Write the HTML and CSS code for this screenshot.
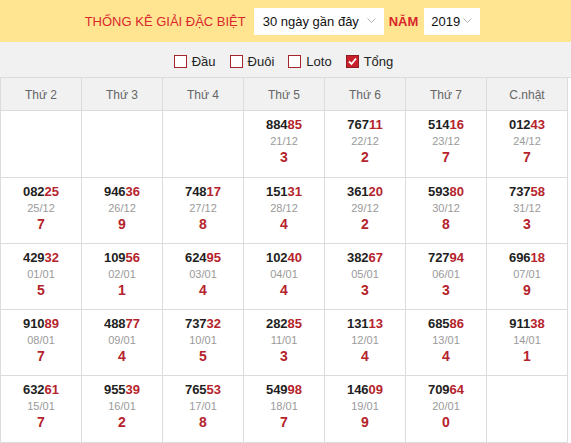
FILE: index.html
```html
<!DOCTYPE html>
<html lang="vi">
<head>
<meta charset="utf-8">
<title>Thống kê giải đặc biệt</title>
<link rel="stylesheet" href="styles.css">
</head>
<body>
<div class="top">
  <span class="title">THỐNG KÊ GIẢI ĐẶC BIỆT</span>
  <div class="select sel-days">30 ngày gần đây<svg class="chev" width="9" height="6" viewBox="0 0 9 6"><polyline points="0.5,0.5 4.5,4.5 8.5,0.5" fill="none" stroke="#b5b5b5" stroke-width="1"/></svg></div>
  <span class="year-label">NĂM</span>
  <div class="select sel-year">2019<svg class="chev" width="9" height="6" viewBox="0 0 9 6"><polyline points="0.5,0.5 4.5,4.5 8.5,0.5" fill="none" stroke="#b5b5b5" stroke-width="1"/></svg></div>
</div>
<div class="filter">
  <label class="opt"><span class="box"></span>Đầu</label>
  <label class="opt"><span class="box"></span>Đuôi</label>
  <label class="opt"><span class="box"></span>Loto</label>
  <label class="opt"><span class="box checked"><svg width="11" height="11" viewBox="0 0 11 11"><polyline points="2,5.5 4.5,8 9,2.5" fill="none" stroke="#fff" stroke-width="1.8"/></svg></span>Tổng</label>
</div>
<div class="grid">
  <div class="hd">Thứ 2</div><div class="hd">Thứ 3</div><div class="hd">Thứ 4</div><div class="hd">Thứ 5</div><div class="hd">Thứ 6</div><div class="hd">Thứ 7</div><div class="hd">C.nhật</div>

  <div class="cell"></div>
  <div class="cell"></div>
  <div class="cell"></div>
  <div class="cell"><div class="num">884<b>85</b></div><div class="date">21/12</div><div class="sum">3</div></div>
  <div class="cell"><div class="num">767<b>11</b></div><div class="date">22/12</div><div class="sum">2</div></div>
  <div class="cell"><div class="num">514<b>16</b></div><div class="date">23/12</div><div class="sum">7</div></div>
  <div class="cell"><div class="num">012<b>43</b></div><div class="date">24/12</div><div class="sum">7</div></div>

  <div class="cell"><div class="num">082<b>25</b></div><div class="date">25/12</div><div class="sum">7</div></div>
  <div class="cell"><div class="num">946<b>36</b></div><div class="date">26/12</div><div class="sum">9</div></div>
  <div class="cell"><div class="num">748<b>17</b></div><div class="date">27/12</div><div class="sum">8</div></div>
  <div class="cell"><div class="num">151<b>31</b></div><div class="date">28/12</div><div class="sum">4</div></div>
  <div class="cell"><div class="num">361<b>20</b></div><div class="date">29/12</div><div class="sum">2</div></div>
  <div class="cell"><div class="num">593<b>80</b></div><div class="date">30/12</div><div class="sum">8</div></div>
  <div class="cell"><div class="num">737<b>58</b></div><div class="date">31/12</div><div class="sum">3</div></div>

  <div class="cell"><div class="num">429<b>32</b></div><div class="date">01/01</div><div class="sum">5</div></div>
  <div class="cell"><div class="num">109<b>56</b></div><div class="date">02/01</div><div class="sum">1</div></div>
  <div class="cell"><div class="num">624<b>95</b></div><div class="date">03/01</div><div class="sum">4</div></div>
  <div class="cell"><div class="num">102<b>40</b></div><div class="date">04/01</div><div class="sum">4</div></div>
  <div class="cell"><div class="num">382<b>67</b></div><div class="date">05/01</div><div class="sum">3</div></div>
  <div class="cell"><div class="num">727<b>94</b></div><div class="date">06/01</div><div class="sum">3</div></div>
  <div class="cell"><div class="num">696<b>18</b></div><div class="date">07/01</div><div class="sum">9</div></div>

  <div class="cell"><div class="num">910<b>89</b></div><div class="date">08/01</div><div class="sum">7</div></div>
  <div class="cell"><div class="num">488<b>77</b></div><div class="date">09/01</div><div class="sum">4</div></div>
  <div class="cell"><div class="num">737<b>32</b></div><div class="date">10/01</div><div class="sum">5</div></div>
  <div class="cell"><div class="num">282<b>85</b></div><div class="date">11/01</div><div class="sum">3</div></div>
  <div class="cell"><div class="num">131<b>13</b></div><div class="date">12/01</div><div class="sum">4</div></div>
  <div class="cell"><div class="num">685<b>86</b></div><div class="date">13/01</div><div class="sum">4</div></div>
  <div class="cell"><div class="num">911<b>38</b></div><div class="date">14/01</div><div class="sum">1</div></div>

  <div class="cell"><div class="num">632<b>61</b></div><div class="date">15/01</div><div class="sum">7</div></div>
  <div class="cell"><div class="num">955<b>39</b></div><div class="date">16/01</div><div class="sum">2</div></div>
  <div class="cell"><div class="num">765<b>53</b></div><div class="date">17/01</div><div class="sum">8</div></div>
  <div class="cell"><div class="num">549<b>98</b></div><div class="date">18/01</div><div class="sum">7</div></div>
  <div class="cell"><div class="num">146<b>09</b></div><div class="date">19/01</div><div class="sum">9</div></div>
  <div class="cell"><div class="num">709<b>64</b></div><div class="date">20/01</div><div class="sum">0</div></div>
  <div class="cell"></div>
</div>
</body>
</html>
```

FILE: styles.css
```css
* { box-sizing: border-box; }
html, body { margin: 0; padding: 0; background: #fff; }
body { font-family: "Liberation Sans", Arial, sans-serif; color: #222; width: 571px; }

.top {
  height: 42px;
  background: #ffe591;
  display: flex;
  align-items: center;
  justify-content: center;
  padding-right: 6px;
}
.title { color: #d9262c; font-size: 13px; margin-right: 8px; }
.select {
  background: #fff;
  height: 27px;
  display: flex;
  align-items: center;
  font-size: 13px;
  color: #111;
  padding: 0 8px 0 9px;
}
.sel-days { width: 130px; }
.sel-year { width: 56px; padding-left: 7px; }
.chev { margin-left: auto; }
.year-label { color: #d9262c; font-weight: bold; font-size: 13px; margin: 0 6px 0 5px; }

.filter {
  height: 36px;
  background: #f1f1f1;
  border-bottom: 1px solid #dcdcdc;
  display: flex;
  align-items: center;
  justify-content: center;
  padding: 3px 4px 0 0;
  gap: 14px;
}
.opt { display: flex; align-items: center; font-size: 13px; color: #222; }
.box {
  width: 13px; height: 13px;
  border: 1px solid #a3262d;
  background: #fff;
  margin-right: 5px;
  display: flex; align-items: center; justify-content: center;
}
.box.checked { background: #c8212b; border-color: #8e1c22; }

.grid {
  width: 568px;
  display: grid;
  grid-template-columns: repeat(7, 81px);
  grid-template-rows: 33px 67px 66px 66px 66px 67px;
  border-left: 1px solid #dcdcdc;
}
.hd {
  background: #f1f1f1;
  border-right: 1px solid #dcdcdc;
  border-bottom: 1px solid #dcdcdc;
  display: flex; align-items: center; justify-content: center;
  font-size: 12px; color: #666;
  padding-top: 1px;
}
.cell {
  border-right: 1px solid #dcdcdc;
  border-bottom: 1px solid #dcdcdc;
  text-align: center;
  padding-top: 6px;
}
.num { font-weight: bold; font-size: 13px; line-height: 16px; color: #1f1f1f; }
.num b { color: #b5242c; }
.date { font-size: 11px; line-height: 16px; color: #9a9a9a; }
.sum { font-weight: bold; font-size: 14px; line-height: 16px; color: #b5242c; }
```
